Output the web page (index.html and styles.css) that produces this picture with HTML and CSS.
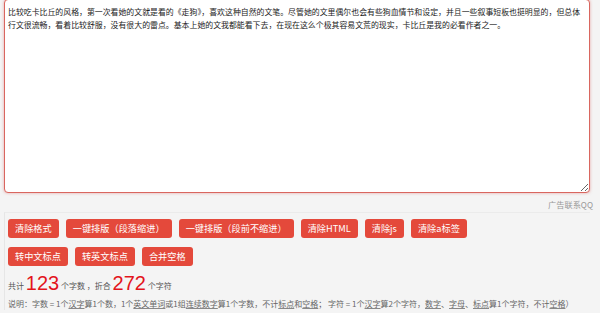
FILE: index.html
```html
<!DOCTYPE html>
<html lang="zh-CN">
<head>
  <meta charset="UTF-8">
  <title>字数统计与排版</title>
  <meta name="viewport" content="width=device-width, initial-scale=1.0">
  <link rel="stylesheet" href="styles.css">
</head>
<body>

  <div class="wrap">
    <textarea class="editor" id="content">比较吃卡比丘的风格，第一次看她的文就是看的《走狗》，喜欢这种自然的文笔。尽管她的文里偶尔也会有些狗血情节和设定，并且一些叙事短板也挺明显的，但总体行文很流畅，看着比较舒服，没有很大的雷点。基本上她的文我都能看下去，在现在这么个极其容易文荒的现实，卡比丘是我的必看作者之一。</textarea>

    <div class="ad">广告联系QQ</div>

    <div class="panel">
      <div class="btns">
        <button>清除格式</button>
        <button>一键排版（段落缩进）</button>
        <button>一键排版（段前不缩进）</button>
        <button>清除HTML</button>
        <button>清除js</button>
        <button>清除a标签</button>
      </div>
      <div class="btns">
        <button>转中文标点</button>
        <button>转英文标点</button>
        <button>合并空格</button>
      </div>

      <div class="count">
        共计 <span class="num" id="words">123</span> 个字数 ，折合 <span class="num" id="chars">272</span> 个字符
      </div>
      <div class="note">
        说明：字数 = 1个<u>汉字</u>算1个数，1个<u>英文单词</u>或1组<u>连续数字</u>算1个字数，不计<u>标点</u>和<u>空格</u>； 字符 = 1个<u>汉字</u>算2个字符，<u>数字</u>、<u>字母</u>、<u>标点</u>算1个字符，不计<u>空格</u>）
      </div>
    </div>
  </div>

</body>
</html>
```

FILE: styles.css
```css
body {
  margin: 0;
  background: #f4f4f4;
  font-family: "Microsoft YaHei", "Noto Sans CJK SC", sans-serif;
  color: #333;
  overflow: hidden;
}
.wrap {
  width: 586px;
  margin-left: 4px;
}
.editor {
  display: block;
  box-sizing: border-box;
  width: 586px;
  height: 194px;
  margin-top: -1px;
  padding: 5px 6px 5px 3px;
  border: 1px solid #d9665f;
  border-radius: 4px;
  box-shadow: 0 0 3px rgba(217, 83, 79, 0.5);
  background: #fff;
  font-family: "Microsoft YaHei", "Noto Sans CJK SC", sans-serif;
  font-size: 7.9px;
  line-height: 13px;
  color: #222;
  resize: vertical;
  outline: none;
}
.ad {
  text-align: right;
  margin-right: -3px;
  font-size: 8.2px;
  line-height: 12px;
  padding: 5px 0 0;
  color: #999;
}
.panel {
  margin-top: 2px;
  border-top: 1px solid #ebebeb;
  border-left: 1px solid #e6e6e6;
  padding: 6px 0 0 3px;
}
.btns {
  display: flex;
  gap: 7px;
  margin-bottom: 9px;
}
button {
  height: 19px;
  padding: 0 7px;
  border: none;
  border-radius: 3px;
  background: #e4493b;
  color: #fff;
  font-family: "Microsoft YaHei", "Noto Sans CJK SC", sans-serif;
  font-size: 9.2px;
  line-height: 19px;
  cursor: pointer;
}
button:hover {
  background: #d33c2e;
}
.count {
  margin-top: -4px;
  font-size: 8px;
  line-height: 24px;
  color: #555;
}
.num {
  font-family: "Liberation Sans", Arial, sans-serif;
  font-size: 20px;
  color: #e3141c;
  vertical-align: -1px;
}
.note {
  font-size: 8px;
  line-height: 12px;
  color: #666;
  white-space: nowrap;
}
.note u {
  text-decoration-color: #888;
}
```
